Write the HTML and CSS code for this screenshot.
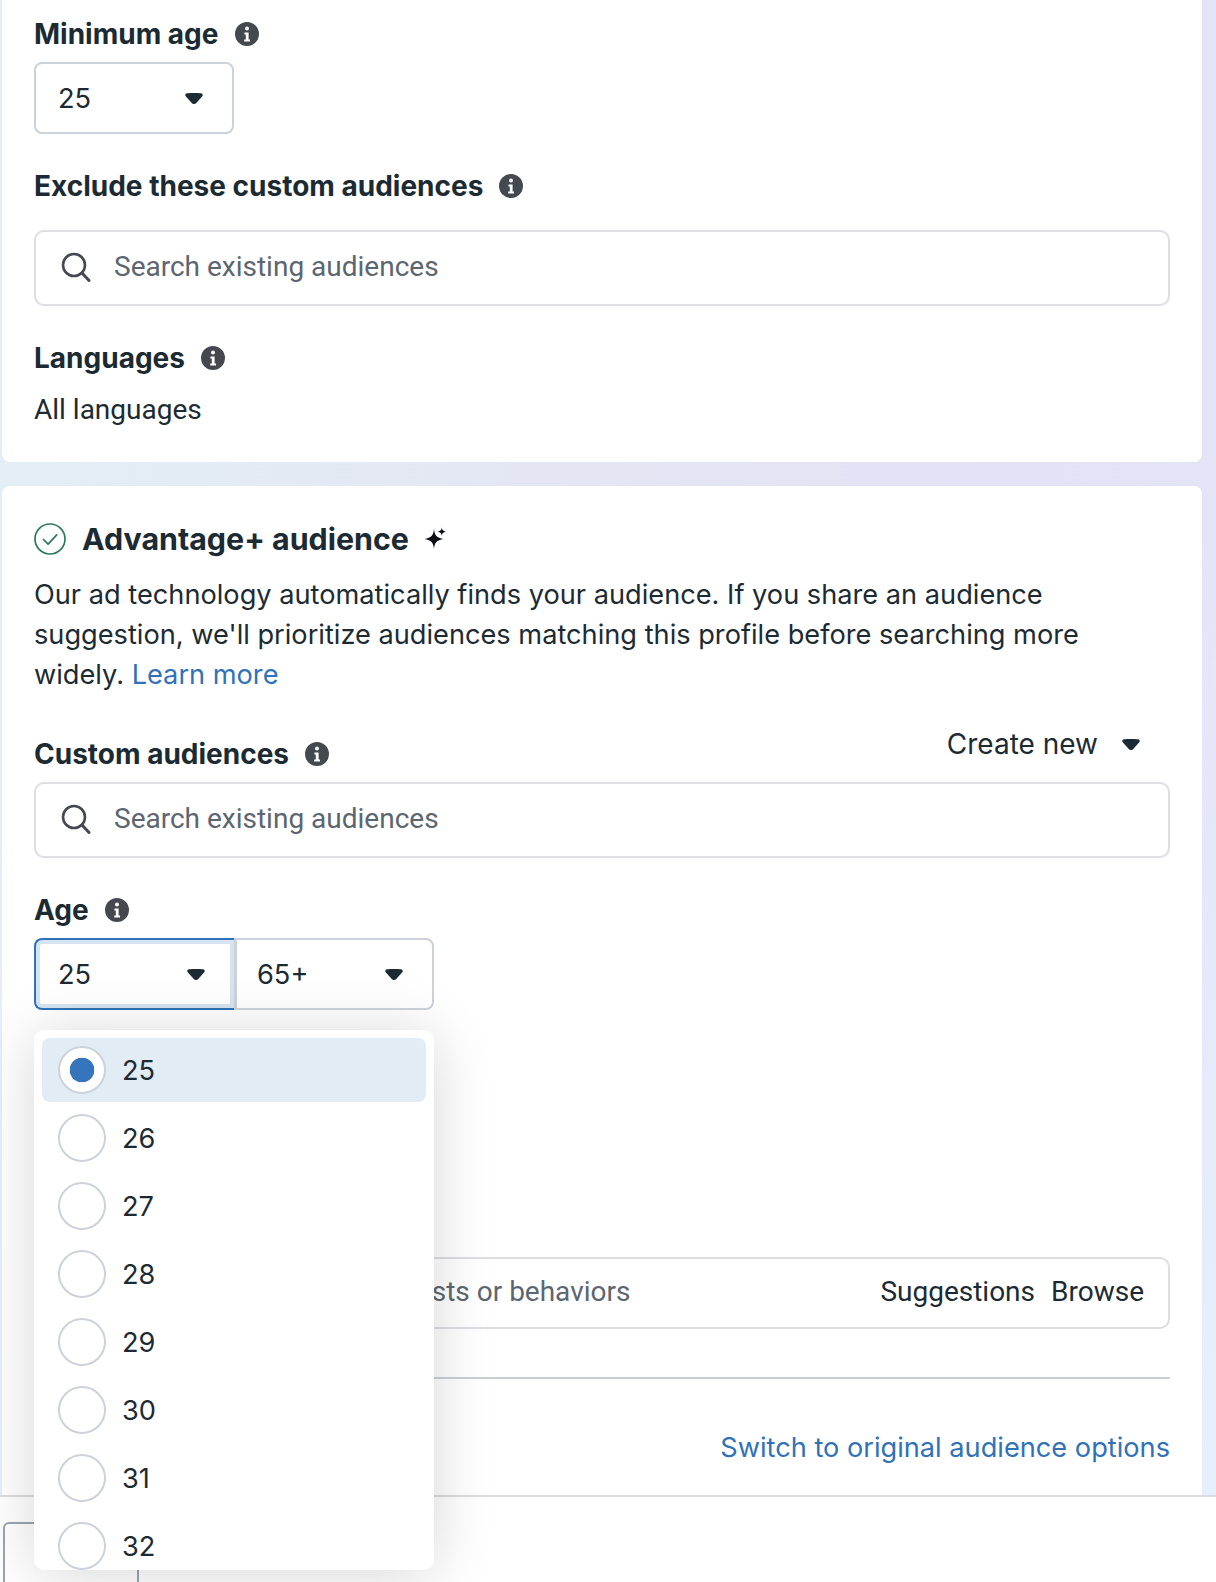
FILE: index.html
```html
<!DOCTYPE html>
<html lang="en">
<head>
<meta charset="utf-8">
<title>Audience</title>
<link rel="stylesheet" href="styles.css">
</head>
<body>
<svg class="defs" width="0" height="0" aria-hidden="true">
  <symbol id="info" viewBox="0 0 24 24"><path fill="#444950" fill-rule="evenodd" d="M12 0a12 12 0 1 1 0 24a12 12 0 0 1 0-24ZM12 4.600a2 2 0 1 0 0 4a2 2 0 0 0 0-4ZM9.400 10.400v2h1.400v5h-1.600v2h5.800v-2h-1.400v-7Z"/></symbol>
  <symbol id="search" viewBox="0 0 32 32"><circle cx="14" cy="14" r="11" fill="none" stroke="#444950" stroke-width="2.600"/><path d="M22 22L29 29.500" stroke="#444950" stroke-width="3" stroke-linecap="round"/></symbol>
  <symbol id="caret" viewBox="0 0 18 11"><path fill="#1c2b33" d="M2 .3C5 -.1 13 -.1 16 .3c1.500.2 2.300 1.700 1.300 2.900l-6.300 7c-1.100 1.100-2.900 1.100-4 0L.7 3.200C-.3 2 .5.500 2 .3Z"/></symbol>
</svg>
<div class="page">
  <main class="main">
    <section class="card card-top">
      <div class="label"><span>Minimum age</span><svg class="info"><use href="#info"/></svg></div>
      <div class="select select-single"><span>25</span><svg class="caret"><use href="#caret"/></svg></div>
      <div class="label label-spaced"><span>Exclude these custom audiences</span><svg class="info"><use href="#info"/></svg></div>
      <div class="search search-exclude"><svg class="search-icon"><use href="#search"/></svg><span>Search existing audiences</span></div>
      <div class="label label-languages"><span>Languages</span><svg class="info"><use href="#info"/></svg></div>
      <p class="value">All languages</p>
    </section>
    <section class="card card-bottom">
      <h2 class="heading">
        <svg class="check" viewBox="0 0 32 32"><circle cx="16" cy="16" r="15" fill="none" stroke="#2b7a5f" stroke-width="1.700"/><path d="M9.500 16.500l4.600 4.600 8.600-9.200" fill="none" stroke="#2b7a5f" stroke-width="1.700" stroke-linecap="round" stroke-linejoin="round"/></svg>
        <span>Advantage+ audience</span>
        <svg class="sparkle" viewBox="0 0 24 24"><path fill="#0b0f14" d="M11 2c.6 6.400 2.700 8.900 9.500 10-6.800 1.100-8.900 3.600-9.500 10-.6-6.400-2.700-8.900-9.500-10 6.800-1.100 8.900-3.600 9.500-10Z"/><path fill="#0b0f14" d="M18.800.6c.3 2.500 1.300 3.600 4 4.100-2.700.5-3.700 1.600-4 4.100-.3-2.500-1.300-3.600-4-4.100 2.700-.5 3.700-1.600 4-4.100Z"/></svg>
      </h2>
      <p class="desc">Our ad technology automatically finds your audience. If you share an audience suggestion, we'll prioritize audiences matching this profile before searching more widely. <a class="link" href="#">Learn more</a></p>
      <div class="custom-row">
        <div class="label"><span>Custom audiences</span><svg class="info"><use href="#info"/></svg></div>
        <div class="create"><span>Create new</span><svg class="caret"><use href="#caret"/></svg></div>
      </div>
      <div class="search search-custom"><svg class="search-icon"><use href="#search"/></svg><span>Search existing audiences</span></div>
      <div class="label label-spaced"><span>Age</span><svg class="info"><use href="#info"/></svg></div>
      <div class="age-wrap">
        <div class="age-group">
          <div class="select select-min"><span>25</span><svg class="caret"><use href="#caret"/></svg></div>
          <div class="select select-max"><span>65+</span><svg class="caret"><use href="#caret"/></svg></div>
        </div>
        <div class="menu">
          <div class="option option-active"><span class="radio radio-on"></span><span>25</span></div>
          <div class="option"><span class="radio"></span><span>26</span></div>
          <div class="option"><span class="radio"></span><span>27</span></div>
          <div class="option"><span class="radio"></span><span>28</span></div>
          <div class="option"><span class="radio"></span><span>29</span></div>
          <div class="option"><span class="radio"></span><span>30</span></div>
          <div class="option"><span class="radio"></span><span>31</span></div>
          <div class="option"><span class="radio"></span><span>32</span></div>
        </div>
      </div>
      <div class="search search-detailed">
        <svg class="search-icon"><use href="#search"/></svg>
        <span class="detailed-text">Add demographics, interests or behaviors</span>
        <span class="detailed-action">Suggestions</span>
        <span class="detailed-action">Browse</span>
      </div>
      <hr class="divider">
      <div class="switch"><a class="link" href="#">Switch to original audience options</a></div>
    </section>
  </main>
  <footer class="footer"><div class="footer-btn"></div></footer>
</div>
</body>
</html>
```
FILE: styles.css
```css
* { box-sizing: border-box; }
html, body { margin: 0; padding: 0; }
body {
  font-family: Roboto, "Liberation Sans", sans-serif;
  color: #1c2b33;
  font-size: 28px;
  line-height: 40px;
  background: #fff;
}
.defs { position: absolute; }
.page {
  width: 1216px;
  height: 1582px;
  overflow: hidden;
  display: flex;
  flex-direction: column;
}
.main {
  flex: 1 1 auto;
  min-height: 0;
  padding: 0 14px 0 2px;
  display: flex;
  flex-direction: column;
  gap: 24px;
  background:
    linear-gradient(180deg, rgba(232, 240, 252, 0) 35%, #e8effc 100%),
    linear-gradient(90deg, #e3eef5 0%, #e4e6f3 50%, #e4e2f6 80%, #e4e4f7 100%);
}
.card {
  background: #fff;
  padding-left: 32px;
  padding-right: 32px;
}
.card-top {
  flex: none;
  height: 462px;
  padding-top: 20px;
  border-radius: 0 0 8px 8px;
}
.card-bottom {
  flex: 1 1 auto;
  min-height: 0;
  padding-top: 33px;
  border-radius: 8px 8px 0 0;
}
.label {
  display: flex;
  align-items: center;
  gap: 16px;
  height: 28px;
  font-family: Inter, sans-serif;
  font-weight: 700;
  font-size: 28px;
  line-height: 28px;
}
.label-spaced { margin-top: 38px; }
.label-languages { margin-top: 38px; }
.info { width: 24px; height: 24px; flex: none; }
.select {
  display: flex;
  align-items: center;
  justify-content: space-between;
  height: 72px;
  width: 200px;
  padding: 1px 29px 0 22px;
  border: 2px solid #ccd2d9;
  background: #fff;
  font-family: Inter, sans-serif;
  font-size: 27.200px;
}
.select-single { margin-top: 14px; border-radius: 8px; }
.caret { width: 18px; height: 11px; flex: none; }
.search {
  display: flex;
  align-items: center;
  height: 76px;
  border: 2px solid #dcdee3;
  border-radius: 10px;
  padding: 0 24px 2px 24px;
  color: #5c6670;
}
.search-exclude { margin-top: 30px; }
.search-icon { width: 32px; height: 32px; flex: none; margin-right: 22px; }
.value { margin: 18px 0 0; }
.heading {
  margin: 0;
  display: flex;
  align-items: center;
  height: 40px;
  font-family: Inter, sans-serif;
  font-size: 30.400px;
  line-height: 40px;
  font-weight: 700;
}
.check { width: 32px; height: 32px; flex: none; margin-right: 16px; }
.sparkle { width: 24px; height: 24px; flex: none; margin-left: 14px; }
.desc {
  margin: 16px 0 0;
  font-family: Inter, sans-serif;
  font-size: 27.200px;
}
.link {
  color: #2f72b9;
  text-decoration: none;
  font-family: Inter, sans-serif;
  font-size: 27.200px;
}
.custom-row {
  margin-top: 29px;
  height: 44px;
  display: flex;
  justify-content: space-between;
  align-items: flex-end;
}
.create {
  align-self: flex-start;
  display: flex;
  align-items: center;
  gap: 24px;
  height: 40px;
  padding-right: 30px;
  font-family: Inter, sans-serif;
  font-size: 28px;
}
.search-custom { margin-top: 14px; }
.age-wrap { position: relative; margin-top: 14px; }
.age-group { display: flex; height: 72px; }
.select-min {
  border-radius: 8px 0 0 8px;
  border: 2px solid #2f72b9;
  border-right: 0;
  box-shadow: inset 0 0 0 4px #d6e3f1;
}
.select-max {
  border-radius: 0 8px 8px 0;
  border-left-width: 3px;
  padding-left: 20px;
}
.menu {
  position: absolute;
  top: 92px;
  left: 0;
  width: 400px;
  height: 540px;
  overflow: hidden;
  padding: 8px;
  background: #fff;
  border-radius: 10px;
  box-shadow: 0 4px 60px rgba(0, 0, 0, .16);
  z-index: 2;
  font-family: Inter, sans-serif;
  font-size: 27.200px;
}
.option {
  display: flex;
  align-items: center;
  gap: 16px;
  height: 64px;
  margin-bottom: 4px;
  padding-left: 16px;
  border-radius: 8px;
}
.option > span:last-child { padding-top: 2px; }
.option-active { background: #e2ecf5; }
.radio {
  width: 48px;
  height: 48px;
  flex: none;
  border-radius: 50%;
  border: 2px solid #ccd2d9;
  background: #fff;
}
.radio-on {
  background: radial-gradient(circle, #3575bb 0 12px, #fff 12.600px);
}
.search-detailed { margin-top: 247px; height: 72px; }
.detailed-text { flex: 1 1 auto; }
.detailed-action { color: #1c2b33; margin-left: 16px; }
.divider { margin: 48px 0 0; border: 0; border-top: 2px solid #cbd0d7; }
.switch { margin-top: 49px; text-align: right; }
.footer {
  flex: none;
  height: 87px;
  padding: 25px 0 0 3px;
  overflow: hidden;
  background: #fff;
  border-top: 2px solid #d9dbdf;
}
.footer-btn {
  width: 136px;
  height: 80px;
  border: 2px solid #9aa5b1;
  border-radius: 6px 6px 0 0;
}
```
